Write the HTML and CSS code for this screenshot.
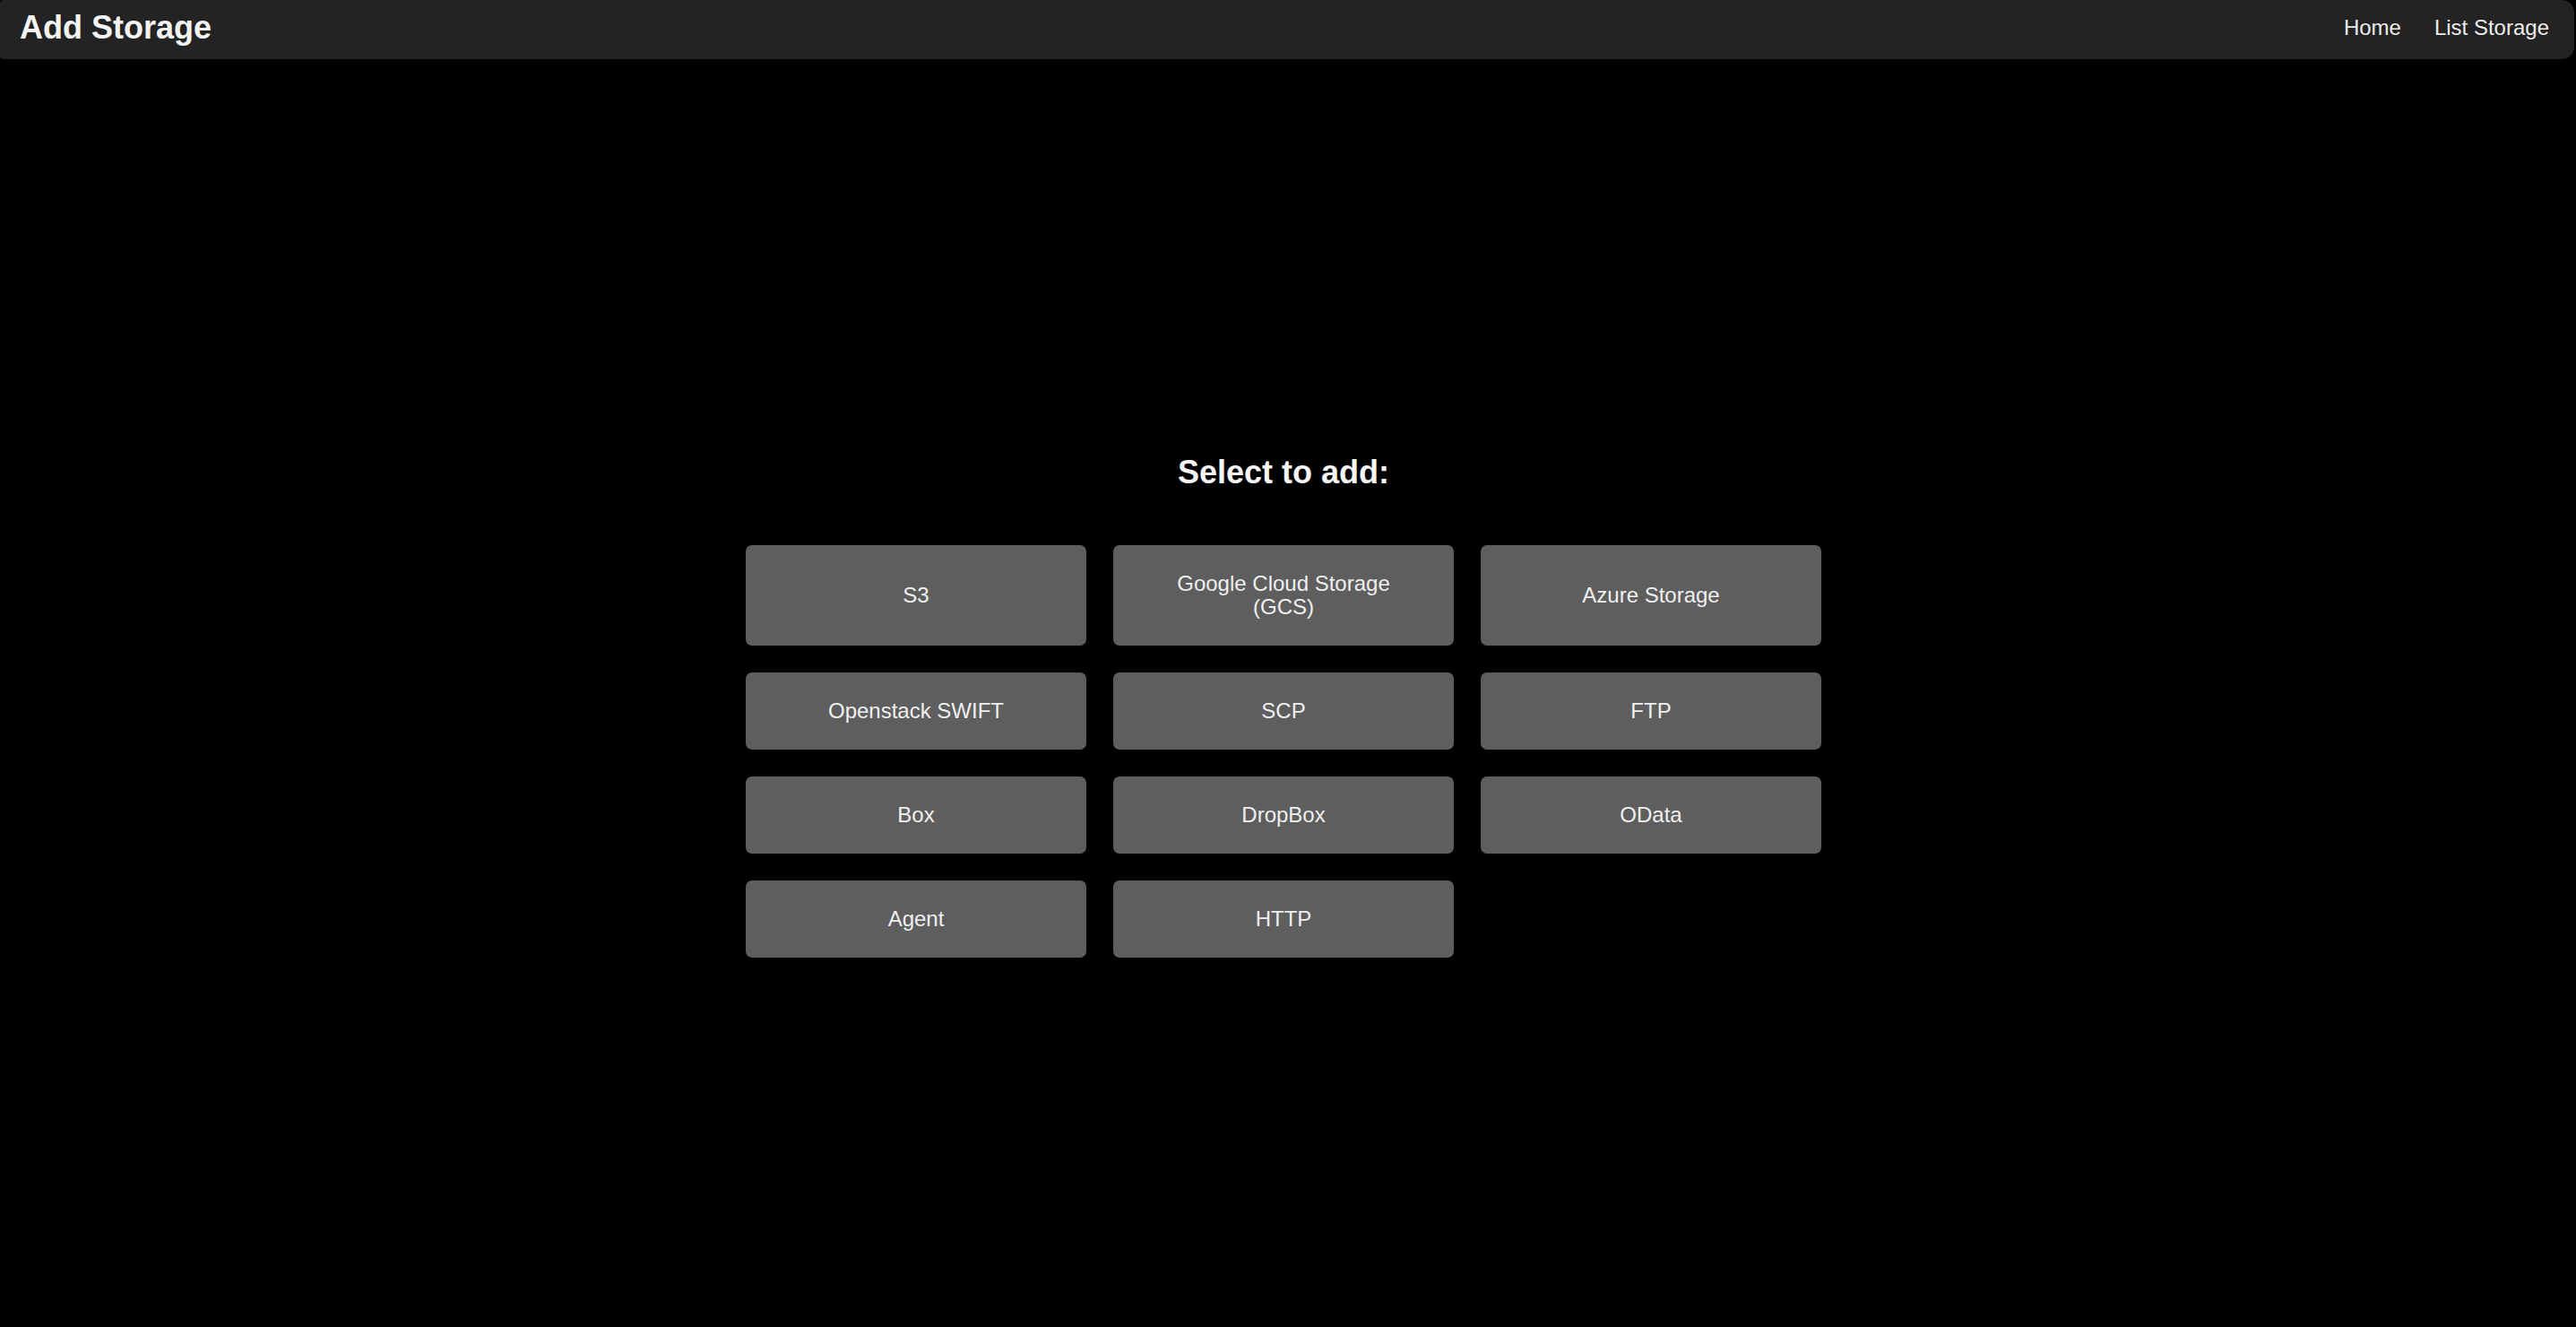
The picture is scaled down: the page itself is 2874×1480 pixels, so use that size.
FILE: index.html
```html
<!DOCTYPE html>
<html lang="en">
<head>
<meta charset="utf-8">
<title>Add Storage</title>
<link rel="stylesheet" href="styles.css">
</head>
<body>
<div class="page">
  <header class="topbar">
    <div class="brand">Add Storage</div>
    <nav class="nav">
      <a href="#" class="nav-link">Home</a>
      <a href="#" class="nav-link">List Storage</a>
    </nav>
  </header>
  <main class="main">
    <h2 class="heading">Select to add:</h2>
    <div class="grid">
      <button class="tile">S3</button>
      <button class="tile">Google Cloud Storage (GCS)</button>
      <button class="tile">Azure Storage</button>
      <button class="tile">Openstack SWIFT</button>
      <button class="tile">SCP</button>
      <button class="tile">FTP</button>
      <button class="tile">Box</button>
      <button class="tile">DropBox</button>
      <button class="tile">OData</button>
      <button class="tile">Agent</button>
      <button class="tile">HTTP</button>
    </div>
  </main>
</div>
</body>
</html>
```

FILE: styles.css
```css
html, body {
  margin: 0;
  padding: 0;
  background: #000;
  height: 100%;
}
body {
  font-family: "Liberation Sans", Arial, sans-serif;
  color: #f2f2f2;
}
.page {
  min-height: 100%;
}
.topbar {
  height: 66px;
  box-sizing: border-box;
  margin-right: 2px;
  background: #232323;
  border-radius: 4px 14px 14px 4px;
  display: flex;
  align-items: center;
  justify-content: space-between;
  padding: 0 28px 5px 22px;
}
.brand {
  font-size: 36px;
  font-weight: bold;
  color: #f4f4f4;
}
.nav {
  display: flex;
  gap: 37px;
}
.nav-link {
  font-size: 24px;
  color: #ececec;
  text-decoration: none;
}
.main {
  display: flex;
  flex-direction: column;
  align-items: center;
  padding: 440px 10px 0 0;
}
.heading {
  margin: 0 0 60px 0;
  font-size: 36px;
  font-weight: bold;
  line-height: normal;
  color: #f6f6f6;
}
.grid {
  display: grid;
  grid-template-columns: repeat(3, 380px);
  gap: 30px;
}
.tile {
  font-family: "Liberation Sans", Arial, sans-serif;
  font-size: 24px;
  line-height: 26px;
  padding: 30px 40px;
  border: none;
  border-radius: 7px;
  background: #5e5e5e;
  color: #efefef;
  text-align: center;
  cursor: pointer;
}
```
